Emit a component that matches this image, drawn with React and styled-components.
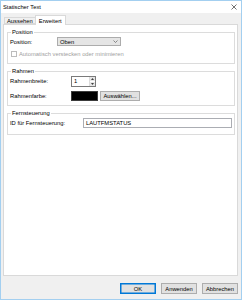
import React from 'react';
import styled, { createGlobalStyle } from 'styled-components';

const FS = '5.8px';

const Global = createGlobalStyle`
  html, body { margin: 0; padding: 0; background: #ffffff; }
  body { font-family: "Liberation Sans", Arial, sans-serif; font-size: ${FS}; color: #000; }
  * { box-sizing: border-box; }
`;

const Window = styled.div`
  width: 242px;
  height: 300px;
  border: 1px solid #a3cff0;
  display: flex;
  flex-direction: column;
  background: #f0f0f0;
`;

const TitleBar = styled.div`
  height: 12px;
  background: #ffffff;
  display: flex;
  align-items: center;
  justify-content: space-between;
  padding: 0 4px 0 2px;
`;

const Title = styled.span`
  font-size: ${FS};
  line-height: 7px;
  color: #000;
`;

const Body = styled.div`
  flex: 1;
  display: flex;
  flex-direction: column;
  padding: 2px 3px 0 2px;
`;

const TabStrip = styled.div`
  display: flex;
  align-items: flex-end;
  height: 9px;
  padding-left: 1px;
  position: relative;
  z-index: 1;
`;

const Tab = styled.div`
  height: ${p => (p.$active ? '10px' : '7px')};
  padding: 0 ${p => (p.$active ? '3px' : '2px')};
  margin-bottom: ${p => (p.$active ? '-1px' : '0')};
  border: 1px solid #d9d9d9;
  border-bottom: ${p => (p.$active ? 'none' : '1px solid #d9d9d9')};
  border-right: ${p => (p.$active ? '1px solid #d9d9d9' : 'none')};
  background: ${p => (p.$active ? '#ffffff' : '#f0f0f0')};
  display: flex;
  align-items: center;
  line-height: 6px;
  font-size: ${FS};
`;

const Panel = styled.div`
  flex: 1;
  background: #ffffff;
  border: 1px solid #d9d9d9;
  padding: 4px 2px 0 3px;
  display: flex;
  flex-direction: column;
  gap: 4px;
`;

const Group = styled.fieldset`
  margin: 0;
  border: 1px solid #dcdcdc;
  padding: 0 2px ${p => p.$pb || 4}px 2px;
  display: flex;
  flex-direction: column;
  gap: ${p => p.$gap || 4}px;
  min-width: 0;
`;

const Legend = styled.legend`
  padding: 0 1px;
  margin-left: 1px;
  line-height: 7px;
  font-size: ${FS};
  color: #000;
`;

const Row = styled.div`
  display: grid;
  grid-template-columns: ${p => p.$label}px auto;
  align-items: center;
  height: ${p => p.$h || 10}px;
`;

const Label = styled.span`
  line-height: 6px;
  white-space: nowrap;
  color: ${p => (p.$disabled ? '#a0a0a0' : '#000')};
`;

const Select = styled.div`
  width: 64px;
  height: 9px;
  border: 1px solid #acacac;
  background: #e5e5e5;
  display: flex;
  align-items: center;
  justify-content: space-between;
  padding: 0 2px 0 2px;
  line-height: 6px;
`;

const CheckRow = styled.div`
  display: flex;
  align-items: center;
  gap: 2px;
  height: 8px;
  padding-left: 1px;
`;

const CheckBox = styled.span`
  width: 6px;
  height: 6px;
  border: 1px solid #bcbcbc;
  background: #fff;
`;

const Spin = styled.div`
  width: 25px;
  height: 11px;
  border: 1px solid #7a7a7a;
  background: #fff;
  display: flex;
`;

const SpinText = styled.span`
  flex: 1;
  padding-left: 2px;
  display: flex;
  align-items: center;
  line-height: 6px;
`;

const SpinButtons = styled.div`
  width: 6px;
  display: flex;
  flex-direction: column;
  border-left: 1px solid #dcdcdc;
`;

const SpinBtn = styled.div`
  flex: 1;
  background: #e6e6e6;
  display: flex;
  align-items: center;
  justify-content: center;
  & + & { border-top: 1px solid #fff; }
`;

const ColorRow = styled.div`
  display: flex;
  align-items: center;
  gap: 2px;
`;

const Swatch = styled.div`
  width: 27px;
  height: 10px;
  background: #000;
  border: 1px solid #3c3c3c;
`;

const Button = styled.button`
  width: ${p => p.$w || 36}px;
  height: ${p => p.$h || 11}px;
  padding: 0;
  margin: 0;
  font-family: "Liberation Sans", Arial, sans-serif;
  font-size: ${FS};
  line-height: 6px;
  color: #000;
  background: #e1e1e1;
  border: 1px solid ${p => (p.$default ? '#0078d7' : '#adadad')};
  box-shadow: ${p => (p.$default ? 'inset 0 0 0 0.5px #0078d7' : 'none')};
`;

const TextInput = styled.div`
  width: 149px;
  height: 10px;
  border: 1px solid #abadb3;
  background: #fff;
  padding-left: 2px;
  display: flex;
  align-items: center;
  line-height: 6px;
`;

const Footer = styled.div`
  height: 23px;
  display: flex;
  justify-content: flex-end;
  align-items: flex-start;
  padding-top: 7px;
  gap: 5px;
`;

const Chevron = () => (
  <svg width="5" height="3" viewBox="0 0 5 3">
    <path d="M0.5 0.5 L2.5 2.5 L4.5 0.5" fill="none" stroke="#606060" strokeWidth="0.7" />
  </svg>
);

const Tri = ({ up }) => (
  <svg width="3" height="2" viewBox="0 0 3 2">
    <path d={up ? 'M0 2 L1.5 0 L3 2 Z' : 'M0 0 L1.5 2 L3 0 Z'} fill="#404040" />
  </svg>
);

const CloseIcon = () => (
  <svg width="6" height="6" viewBox="0 0 6 6">
    <path d="M0.5 0.5 L5.5 5.5 M5.5 0.5 L0.5 5.5" stroke="#333" strokeWidth="0.7" />
  </svg>
);

export default function App() {
  return (
    <>
      <Global />
      <Window>
        <TitleBar>
          <Title>Statischer Text</Title>
          <CloseIcon />
        </TitleBar>
        <Body>
          <TabStrip>
            <Tab>Aussehen</Tab>
            <Tab $active>Erweitert</Tab>
          </TabStrip>
          <Panel>
            <Group $gap={3} $pb={5}>
              <Legend>Position</Legend>
              <Row $label={47} $h={11}>
                <Label>Position:</Label>
                <Select>
                  <span>Oben</span>
                  <Chevron />
                </Select>
              </Row>
              <CheckRow>
                <CheckBox />
                <Label $disabled>Automatisch verstecken oder minimieren</Label>
              </CheckRow>
            </Group>
            <Group $gap={3} $pb={4}>
              <Legend>Rahmen</Legend>
              <Row $label={61} $h={12}>
                <Label>Rahmenbreite:</Label>
                <Spin>
                  <SpinText>1</SpinText>
                  <SpinButtons>
                    <SpinBtn><Tri up /></SpinBtn>
                    <SpinBtn><Tri /></SpinBtn>
                  </SpinButtons>
                </Spin>
              </Row>
              <Row $label={61} $h={11}>
                <Label>Rahmenfarbe:</Label>
                <ColorRow>
                  <Swatch />
                  <Button $w={40} $h={10}>Auswählen...</Button>
                </ColorRow>
              </Row>
            </Group>
            <Group $gap={3} $pb={6}>
              <Legend>Fernsteuerung</Legend>
              <Row $label={73} $h={11}>
                <Label>ID für Fernsteuerung:</Label>
                <TextInput>LAUTFMSTATUS</TextInput>
              </Row>
            </Group>
          </Panel>
          <Footer>
            <Button $default>OK</Button>
            <Button>Anwenden</Button>
            <Button>Abbrechen</Button>
          </Footer>
        </Body>
      </Window>
    </>
  );
}
